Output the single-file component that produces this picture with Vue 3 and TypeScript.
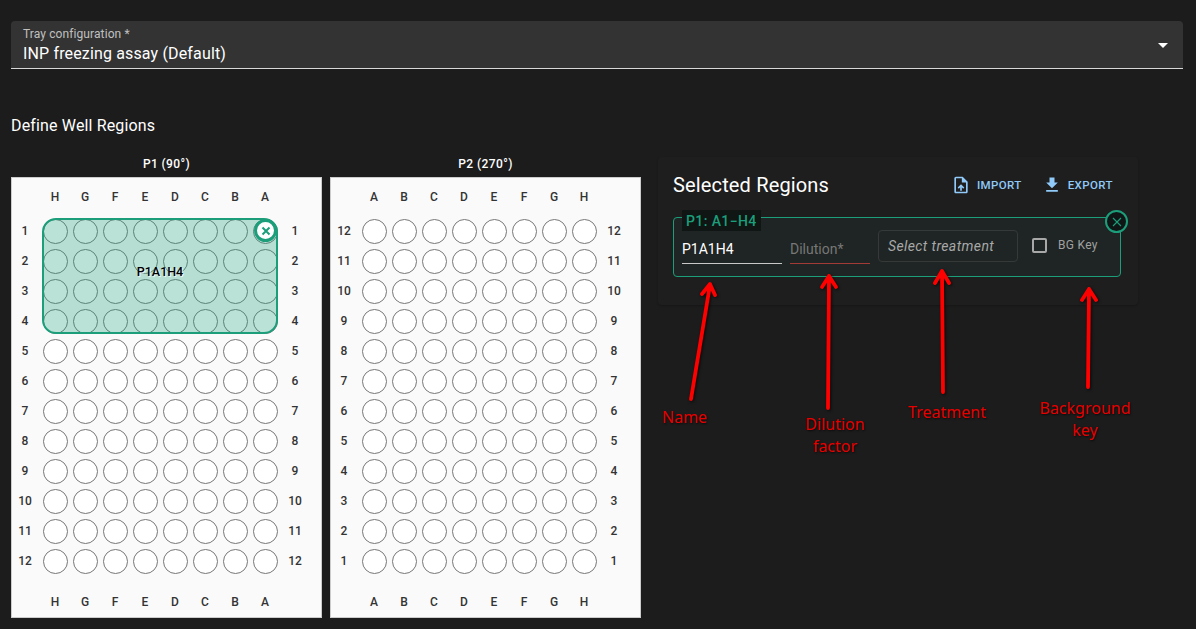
<template>
  <div class="page">
    <div class="select-field">
      <div class="select-text">
        <label>Tray configuration *</label>
        <div class="select-value">INP freezing assay (Default)</div>
      </div>
      <span class="select-caret"></span>
    </div>

    <h2 class="section-title">Define Well Regions</h2>

    <div class="content-row">
      <div v-for="tray in trays" :key="tray.name" class="tray-col">
        <div class="tray-title">{{ tray.name }}</div>
        <div class="tray">
          <template v-for="(cell, i) in tray.cells" :key="i">
            <div v-if="cell.kind === 'label'" class="tray-label" :class="cell.cls">{{ cell.text }}</div>
            <div v-else-if="cell.kind === 'well'" class="well-cell"><span class="well"></span></div>
            <div v-else></div>
          </template>

          <div v-if="tray.selected" class="region">
            <span class="region-name">P1A1H4</span>
            <button class="region-remove">
              <svg viewBox="0 0 24 24" width="14" height="14"><path d="M6 6 18 18M18 6 6 18" /></svg>
            </button>
          </div>
        </div>
      </div>

      <section class="panel">
        <div class="panel-head">
          <h3>Selected Regions</h3>
          <div class="panel-actions">
            <button class="text-btn">
              <svg viewBox="0 0 24 24" width="20" height="20"><path d="M14 2H6c-1.1 0-2 .9-2 2v16c0 1.1.9 2 2 2h12c1.1 0 2-.9 2-2V8zm4 18H6V4h7v5h5zM8 15.01l1.41 1.41L11 14.84V19h2v-4.16l1.59 1.59L16 15.01 12.01 11z" /></svg>
              IMPORT
            </button>
            <button class="text-btn">
              <svg viewBox="0 0 24 24" width="20" height="20"><path d="M5 20h14v-2H5zM19 9h-4V3H9v6H5l7 7z" /></svg>
              EXPORT
            </button>
          </div>
        </div>

        <div class="region-card">
          <span class="region-legend">P1: A1−H4</span>
          <div class="field name-field">P1A1H4</div>
          <div class="field dilution-field">Dilution*</div>
          <div class="treatment-field">Select treatment</div>
          <label class="bg-key"><span class="checkbox"></span>BG Key</label>
          <button class="card-remove">
            <svg viewBox="0 0 24 24" width="16" height="16"><path d="M6 6 18 18M18 6 6 18" /></svg>
          </button>
        </div>
      </section>
    </div>

    <!-- screenshot annotations -->
    <svg class="arrows" viewBox="0 0 1196 629" width="1196" height="629">
      <path v-for="a in arrows" :key="a" :d="a" />
    </svg>
    <span class="note" style="left: 662px; top: 406px">Name</span>
    <span class="note note-center" style="left: 835px; top: 413px">Dilution<br />factor</span>
    <span class="note note-center" style="left: 947px; top: 401px">Treatment</span>
    <span class="note note-center" style="left: 1085px; top: 397px">Background<br />key</span>
  </div>
</template>

<script setup lang="ts">
type Cell = { kind: 'label' | 'well' | 'empty'; text?: string; cls?: string }

const arrows = [
  'M691 399 710 285M702 294 710 284 715 295',
  'M828 408 829 276M822 287 829 276 836 287',
  'M943 392 942 272M935 283 942 271 949 283',
  'M1088 387 1089 289M1082 300 1089 289 1096 300',
]

function buildCells(cols: string[], rows: number[]): Cell[] {
  const axis = (cls: string): Cell[] => [
    { kind: 'empty' },
    ...cols.map((c): Cell => ({ kind: 'label', text: c, cls })),
    { kind: 'empty' },
  ]
  const cells: Cell[] = axis('axis-top')
  for (const r of rows) {
    cells.push({ kind: 'label', text: String(r), cls: 'axis-left' })
    cols.forEach(() => cells.push({ kind: 'well' }))
    cells.push({ kind: 'label', text: String(r) })
  }
  return cells.concat(axis('axis-bottom'))
}

const asc = [1, 2, 3, 4, 5, 6, 7, 8, 9, 10, 11, 12]

const trays = [
  { name: 'P1 (90°)', selected: true, cells: buildCells(['H', 'G', 'F', 'E', 'D', 'C', 'B', 'A'], asc) },
  {
    name: 'P2 (270°)',
    selected: false,
    cells: buildCells(['A', 'B', 'C', 'D', 'E', 'F', 'G', 'H'], [...asc].reverse()),
  },
]
</script>

<style>
html,
body {
  background: #1c1c1c;
}
</style>

<style scoped>
.page {
  position: relative;
  width: 1196px;
  height: 629px;
  overflow: hidden;
  box-sizing: border-box;
  padding: 21px 13px 0 11px;
  background: #1c1c1c;
  color: #fff;
  font-family: Roboto, sans-serif;
}

.select-field {
  height: 48px;
  box-sizing: border-box;
  display: flex;
  align-items: center;
  justify-content: space-between;
  padding: 2px 15px 0 12px;
  background: #333;
  border-bottom: 1px solid #d8d8d8;
  border-radius: 4px 4px 0 0;
}

.select-text label {
  display: block;
  font-size: 12px;
  line-height: 16px;
  color: rgba(255, 255, 255, 0.7);
  letter-spacing: 0.1px;
}

.select-value {
  font-size: 16px;
  line-height: 24px;
  letter-spacing: 0.15px;
}

.select-caret {
  width: 0;
  height: 0;
  border-left: 5px solid transparent;
  border-right: 5px solid transparent;
  border-top: 5px solid #fff;
}

.section-title {
  margin: 45px 0 0;
  font-size: 16px;
  line-height: 24px;
  font-weight: 400;
  letter-spacing: 0.15px;
}

.content-row {
  display: flex;
  align-items: flex-start;
  gap: 8px;
  margin-top: 16px;
}

.tray-title {
  height: 23px;
  font-size: 12px;
  line-height: 20px;
  font-weight: 500;
  text-align: center;
  letter-spacing: 0.4px;
}

.tray {
  position: relative;
  width: 311px;
  height: 441px;
  box-sizing: border-box;
  display: grid;
  grid-template-columns: 28px repeat(8, 30px) 30px;
  grid-template-rows: 38px repeat(12, 30px) 41px;
  background: #fafafa;
  border: 1px solid #ccc;
}

.tray-label {
  display: flex;
  align-items: center;
  justify-content: center;
  font-size: 12px;
  font-weight: 500;
  color: #333;
}

.axis-left {
  padding-right: 2px;
}

.axis-bottom {
  padding-top: 11px;
}

.well-cell {
  display: flex;
  align-items: center;
  justify-content: center;
}

.well {
  width: 25px;
  height: 25px;
  box-sizing: border-box;
  border: 1.3px solid #777;
  border-radius: 50%;
  background: #fff;
}

.region {
  position: absolute;
  left: 30px;
  top: 40px;
  width: 236px;
  height: 116px;
  box-sizing: border-box;
  display: flex;
  align-items: center;
  justify-content: center;
  padding-bottom: 10px;
  background: rgba(27, 158, 119, 0.3);
  border: 2.5px solid #1c9e7b;
  border-radius: 14px;
}

.region-name {
  font-size: 12.5px;
  font-weight: 500;
  color: #000;
  text-shadow: 1px 1px 1px #fff;
}

.region-remove {
  position: absolute;
  right: -1px;
  top: -1px;
  width: 23px;
  height: 23px;
  box-sizing: border-box;
  padding: 0;
  display: flex;
  align-items: center;
  justify-content: center;
  background: #fff;
  border: 3px solid #1c9e7b;
  border-radius: 50%;
}

.region-remove path {
  fill: none;
  stroke: #1c9e7b;
  stroke-width: 3.4;
}

.panel {
  width: 480px;
  height: 148px;
  box-sizing: border-box;
  margin: 3px 0 0 9px;
  padding: 0 17px 0 15px;
  background: #1e1e1e;
  border-radius: 4px;
  box-shadow: 0 1px 2px rgba(0, 0, 0, 0.2);
}

.panel-head {
  height: 60px;
  box-sizing: border-box;
  padding-bottom: 4px;
  display: flex;
  align-items: center;
  justify-content: space-between;
}

.panel-head h3 {
  margin: 0;
  font-size: 20px;
  font-weight: 400;
  letter-spacing: 0.15px;
}

.panel-actions {
  display: flex;
  gap: 4px;
}

.text-btn {
  display: flex;
  align-items: center;
  gap: 6px;
  height: 30px;
  padding: 0 8px;
  background: none;
  border: 0;
  color: #90caf9;
  font-family: inherit;
  font-size: 11.5px;
  font-weight: 500;
  letter-spacing: 0.4px;
}

.text-btn svg {
  fill: #90caf9;
}

.region-card {
  position: relative;
  height: 60px;
  box-sizing: border-box;
  display: flex;
  align-items: flex-start;
  padding: 12px 0 0 8px;
  background: #1f2524;
  border: 1px solid #1c9e7b;
  border-radius: 4px;
}

.region-legend {
  position: absolute;
  left: 8px;
  top: -8px;
  height: 21px;
  padding: 0 4px;
  display: flex;
  align-items: center;
  background: #0f1614;
  color: #1c9e7b;
  font-size: 14px;
  font-weight: 500;
  letter-spacing: 0.4px;
}

.field {
  height: 34px;
  box-sizing: border-box;
  padding-top: 9px;
  font-size: 14px;
  line-height: 20px;
}

.name-field {
  width: 100px;
  border-bottom: 1px solid #c8c8c8;
}

.dilution-field {
  width: 80px;
  margin-left: 8px;
  color: #777;
  border-bottom: 1px solid #a23a35;
}

.treatment-field {
  width: 140px;
  height: 32px;
  box-sizing: border-box;
  margin: 0 0 0 8px;
  padding: 0 9px;
  display: flex;
  align-items: center;
  border: 1px solid #353a39;
  border-radius: 4px;
  font-size: 14px;
  font-style: italic;
  letter-spacing: 0.4px;
  color: #a8a8a8;
}

.bg-key {
  display: flex;
  align-items: center;
  height: 30px;
  margin-left: 14px;
  font-size: 12px;
  letter-spacing: 0.3px;
  color: #a0a0a0;
}

.checkbox {
  width: 15px;
  height: 15px;
  box-sizing: border-box;
  margin-right: 11px;
  border: 2px solid #a8a8a8;
  border-radius: 2px;
}

.card-remove {
  position: absolute;
  right: -8px;
  top: -8px;
  width: 23px;
  height: 23px;
  box-sizing: border-box;
  padding: 0;
  display: flex;
  align-items: center;
  justify-content: center;
  background: #101615;
  border: 2px solid #1c9e7b;
  border-radius: 50%;
}

.card-remove path {
  fill: none;
  stroke: #1c9e7b;
  stroke-width: 1.6;
}

.arrows {
  position: absolute;
  left: 0;
  top: 0;
  pointer-events: none;
  filter: drop-shadow(1px 1px 1.5px rgba(0, 0, 0, 0.7));
}

.arrows path {
  fill: none;
  stroke: #f00;
  stroke-width: 3.8;
  stroke-linecap: round;
  stroke-linejoin: round;
}

.note {
  position: absolute;
  font-family: "Noto Sans", sans-serif;
  font-size: 16px;
  line-height: 22px;
  color: #e60000;
  text-shadow: 1px 1px 2px rgba(0, 0, 0, 0.7);
}

.note-center {
  transform: translateX(-50%);
  text-align: center;
  white-space: nowrap;
}
</style>
